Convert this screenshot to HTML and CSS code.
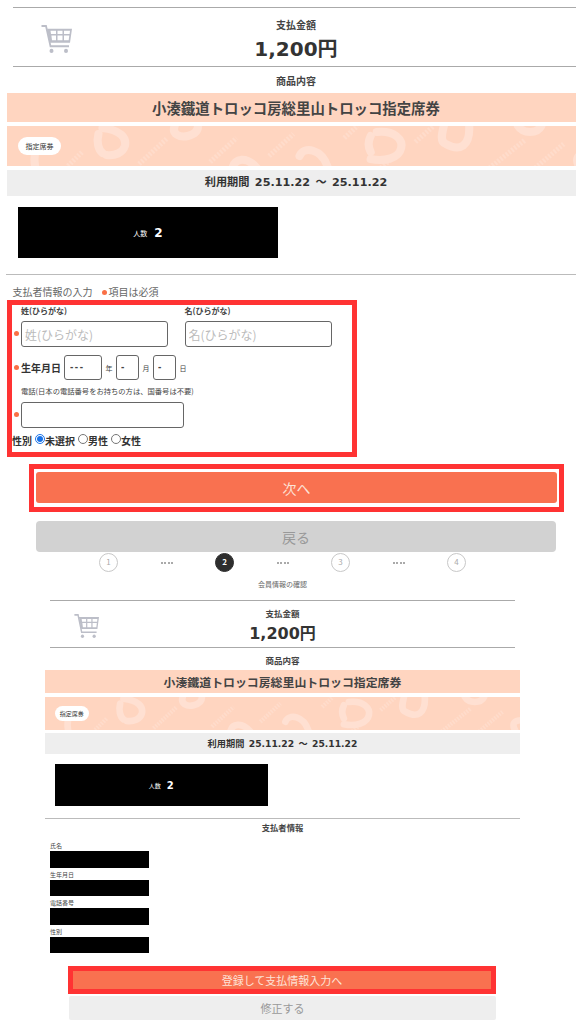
FILE: index.html
```html
<!DOCTYPE html>
<html lang="ja">
<head>
<meta charset="utf-8">
<title>支払者情報の入力</title>
<link rel="stylesheet" href="styles.css">
</head>
<body>
<svg class="defs" width="0" height="0" aria-hidden="true">
  <symbol id="cart" viewBox="0 0 31 27" preserveAspectRatio="none">
    <path class="cart-line" d="M0.5 1H5L9.5 20.5H28"/>
    <path class="cart-basket" fill-rule="evenodd" d="M6 3.5H31L29 17H9ZM9.5 5.5L10 8.7H15V5.5ZM16.5 5.5V8.7H21.5V5.5ZM23 5.5V8.7H28.6L29 5.5ZM10.4 10.2L11 14.8H15V10.2ZM16.5 10.2V14.8H21.5V10.2ZM23 10.2V14.8H27.7L28.3 10.2Z"/>
    <circle class="cart-wheel" cx="10.5" cy="25" r="2"/>
    <circle class="cart-wheel" cx="25" cy="25" r="2"/>
  </symbol>
  <symbol id="pattern" viewBox="0 0 569 40" preserveAspectRatio="none">
    <g class="marks">
      <path d="M130 38L158 12"/>
      <path d="M200 36L226 12"/>
      <path d="M258 30L282 8"/>
      <path d="M402 16L420 0"/>
      <path d="M475 42L510 14"/>
      <path d="M520 42L548 18"/>
      <path d="M60 40L74 26"/>
      <path d="M332 12L345 0"/>
      <path d="M368 42L382 30"/>
    </g>
    <g class="crescents">
      <path d="M94 2C112 4 118 12 116 20C114 27 106 30 98 29"/>
      <path d="M90 8C88 16 90 24 94 27"/>
      <path d="M165 0C162 8 170 12 178 10C186 8 188 4 188 0"/>
      <path d="M28 42C24 22 34 14 44 20"/>
      <path d="M222 42C224 32 236 30 246 42"/>
      <path d="M364 6C382 4 390 14 388 22C386 32 372 36 358 33"/>
      <path d="M358 10C355 16 356 22 358 26"/>
      <path d="M430 0C428 8 426 16 432 18C446 26 456 20 455 0"/>
      <path d="M503 0C508 8 522 8 526 0"/>
      <path d="M288 30C292 20 310 22 316 42"/>
      <path d="M564 42C558 32 562 28 572 28"/>
    </g>
  </symbol>
</svg>

<main class="panel">
  <section class="summary">
    <svg class="cart"><use href="#cart"/></svg>
    <div class="summary-text">
      <div class="caption">支払金額</div>
      <div class="amount">1,200円</div>
    </div>
  </section>
  <div class="caption product-heading">商品内容</div>
  <div class="ticket-title">小湊鐵道トロッコ房総里山トロッコ指定席券</div>
  <div class="ticket-type">
    <svg class="pattern"><use href="#pattern"/></svg>
    <span class="pill">指定席券</span>
  </div>
  <div class="ticket-period">利用期間 25.11.22 ～ 25.11.22</div>
  <div class="people"><small>人数</small><b>2</b></div>

  <hr class="divider">
  <p class="form-note">支払者情報の入力<span class="dot dot--note"></span>項目は必須</p>

  <form class="form-box">
    <div class="row">
      <span class="dot dot--input"></span>
      <label class="field">
        <span class="mini-label">姓(ひらがな)</span>
        <input class="text-input" type="text" placeholder="姓(ひらがな)">
      </label>
      <label class="field">
        <span class="mini-label">名(ひらがな)</span>
        <input class="text-input" type="text" placeholder="名(ひらがな)">
      </label>
    </div>
    <div class="row row--dob">
      <span class="dot"></span>
      <span class="dob-label">生年月日</span>
      <select class="date-select date-select--year"><option>---</option></select>
      <span class="unit">年</span>
      <select class="date-select"><option>-</option></select>
      <span class="unit">月</span>
      <select class="date-select"><option>-</option></select>
      <span class="unit">日</span>
    </div>
    <div class="row row--phone">
      <span class="dot dot--input"></span>
      <label class="field field--phone">
        <span class="mini-label mini-label--thin">電話(日本の電話番号をお持ちの方は、国番号は不要)</span>
        <input class="text-input" type="tel">
      </label>
    </div>
    <div class="gender">
      <span>性別</span>
      <label class="radio"><input type="radio" name="gender" checked>未選択</label>
      <label class="radio"><input type="radio" name="gender">男性</label>
      <label class="radio"><input type="radio" name="gender">女性</label>
    </div>
  </form>

  <div class="next-frame"><button class="btn btn--primary" type="button">次へ</button></div>
  <button class="btn btn--back" type="button">戻る</button>
</main>

<section class="panel panel--compact">
  <ol class="steps">
    <li class="step">1</li>
    <li class="step-gap"></li>
    <li class="step step--active">2</li>
    <li class="step-gap"></li>
    <li class="step">3</li>
    <li class="step-gap"></li>
    <li class="step">4</li>
  </ol>
  <div class="step-title">会員情報の確認</div>
  <section class="summary">
    <svg class="cart"><use href="#cart"/></svg>
    <div class="summary-text">
      <div class="caption">支払金額</div>
      <div class="amount">1,200円</div>
    </div>
  </section>
  <div class="caption product-heading">商品内容</div>
  <div class="ticket-title">小湊鐵道トロッコ房総里山トロッコ指定席券</div>
  <div class="ticket-type">
    <svg class="pattern"><use href="#pattern"/></svg>
    <span class="pill">指定席券</span>
  </div>
  <div class="ticket-period">利用期間 25.11.22 ～ 25.11.22</div>
  <div class="people"><small>人数</small><b>2</b></div>

  <hr class="divider">
  <div class="payer-heading">支払者情報</div>
  <dl class="payer">
    <dt>氏名</dt><dd></dd>
    <dt>生年月日</dt><dd></dd>
    <dt>電話番号</dt><dd></dd>
    <dt>性別</dt><dd></dd>
  </dl>
  <button class="btn btn--register" type="button">登録して支払情報入力へ</button>
  <button class="btn btn--edit" type="button">修正する</button>
</section>
</body>
</html>
```
FILE: styles.css
```css
* { box-sizing: border-box; }
html, body { margin: 0; padding: 0; }
body {
  width: 576px;
  height: 1024px;
  overflow: hidden;
  background: #fff;
  color: #333;
  font-family: "Noto Sans CJK JP", "Noto Sans", sans-serif;
}
.defs { position: absolute; }

.panel { margin-left: 7px; width: 578px; }
.panel--compact { margin-left: 45px; width: 475px; }

/* summary */
.summary {
  margin: 7px 5.5px 0;
  height: 60px;
  border-top: 1px solid #aaa;
  border-bottom: 1px solid #aaa;
  position: relative;
}
.cart {
  position: absolute;
  left: 28.5px;
  top: 17px;
  width: 31px;
  height: 28px;
}
.cart-line { fill: none; stroke: #bcbec8; stroke-width: 1.8; }
.cart-basket, .cart-wheel { fill: #bcbec8; }
.summary-text { padding-top: 10px; text-align: center; }
.caption {
  font-size: 10px;
  line-height: 14px;
  font-weight: 700;
  text-align: center;
  color: #444;
}
.amount {
  margin-top: 3px;
  font-family: "DejaVu Sans", "Noto Sans CJK JP", sans-serif;
  font-size: 20px;
  line-height: 28px;
  font-weight: 700;
  color: #333;
}
.product-heading { margin: 7px 0 5px; }

.ticket-title {
  height: 29px;
  background: #ffd5c0;
  font-size: 14.4px;
  line-height: 29px;
  font-weight: 700;
  text-align: center;
  color: #444;
}
.ticket-type {
  position: relative;
  height: 40px;
  margin-top: 4px;
  padding-left: 11px;
  display: flex;
  align-items: center;
  background: #ffd5c0;
  overflow: hidden;
}
.pattern { position: absolute; left: 0; top: 0; width: 100%; height: 100%; }
.crescents path { fill: none; stroke: #ffe0d2; stroke-width: 8; stroke-linecap: round; }
.marks path { fill: none; stroke: #ffdccb; stroke-width: 5; stroke-dasharray: 2 1.5; }
.pill {
  position: relative;
  width: 43px;
  height: 18px;
  border-radius: 9px;
  background: #fff;
  font-size: 7px;
  line-height: 18px;
  text-align: center;
  color: #333;
}
.ticket-period {
  height: 26px;
  margin-top: 4px;
  background: #eee;
  font-family: "DejaVu Sans", "Noto Sans CJK JP", sans-serif;
  font-size: 11.2px;
  line-height: 26px;
  font-weight: 700;
  word-spacing: 1.5px;
  text-align: center;
  color: #333;
}
.people {
  width: 260px;
  height: 51px;
  margin: 11px 0 0 11px;
  display: flex;
  align-items: center;
  justify-content: center;
  gap: 7px;
  background: #000;
  color: #fff;
}
.people small { font-size: 7px; }
.people b { font-family: "DejaVu Sans", sans-serif; font-size: 12px; }

.divider {
  height: 1px;
  margin: 16px 0 0 -1px;
  border: 0;
  background: #bbb;
}

/* form */
.form-note {
  margin: 9px 0 0 5.5px;
  font-size: 10px;
  line-height: 15px;
  color: #666;
}
.dot {
  flex: none;
  width: 5px;
  height: 5px;
  margin: 0 2px;
  border-radius: 50%;
  background: #fa7046;
}
.dot--note { display: inline-block; margin: 0 2px 1px 9px; vertical-align: middle; }
.dot--input { align-self: flex-end; margin-bottom: 11px; }

.form-box {
  width: 350px;
  height: 157px;
  margin-top: 1px;
  border: 5px solid #ff3333;
}
.row { display: flex; }
.field { display: block; width: 147px; margin-right: 16.5px; }
.field--phone { width: auto; margin-right: 0; }
.field--phone .text-input { width: 163px; }
.mini-label {
  display: block;
  height: 10px;
  margin: 1px 0 5px;
  font-size: 8px;
  line-height: 10px;
  font-weight: 700;
  color: #444;
  white-space: nowrap;
}
.mini-label--thin { margin: 0 0 6px; font-size: 7.3px; font-weight: 400; }
.text-input {
  display: block;
  width: 147px;
  height: 26px;
  padding: 0 3px;
  border: 1px solid #666;
  border-radius: 3px;
  background: #fff;
  font: 12px "Noto Sans CJK JP", sans-serif;
  color: #333;
}
.text-input::placeholder { color: #bbb; opacity: 1; }
.row--dob { align-items: center; margin-top: 8px; height: 25px; }
.row--phone { margin-top: 6px; }
.dob-label { width: 43px; font-size: 10px; font-weight: 700; color: #333; }
.date-select {
  appearance: none;
  width: 23px;
  height: 25px;
  padding: 0 0 2px 4px;
  border: 1px solid #666;
  border-radius: 3px;
  background: #fff;
  font: 700 10px "Liberation Sans", sans-serif;
  letter-spacing: 1.5px;
  color: #444;
}
.date-select--year { width: 38px; padding-left: 5px; }
.unit { width: 14px; font-size: 7px; text-align: center; color: #444; }
.gender {
  display: flex;
  align-items: center;
  gap: 3px;
  height: 14px;
  margin: 5px 0 0;
  font-size: 10px;
  font-weight: 700;
  color: #333;
}
.radio { display: flex; align-items: center; }
.radio input {
  width: 10px;
  height: 10px;
  margin: 0 0 2px 0;
  accent-color: #1a73e8;
}

/* buttons */
.btn {
  display: block;
  border: 0;
  font-family: inherit;
  text-align: center;
  padding: 0;
}
.next-frame {
  width: 535px;
  height: 48px;
  margin: 7px 0 0 22px;
  padding: 3px 2px 4px;
  border: 5px solid #ff3333;
}
.btn--primary {
  width: 100%;
  height: 100%;
  border-radius: 3px;
  background: #f97150;
  color: #fde3d8;
  font-size: 14px;
}
.btn--back {
  width: 520px;
  height: 31px;
  margin: 9px 0 0 29px;
  border-radius: 4px;
  background: #d2d2d2;
  color: #999;
  font-size: 14px;
}

/* steps */
.steps {
  display: flex;
  justify-content: center;
  align-items: center;
  list-style: none;
  height: 19px;
  margin: 1px 0 0;
  padding: 0;
}
.step {
  flex: none;
  width: 19px;
  height: 19px;
  border: 1.5px solid #c8c8c8;
  border-radius: 50%;
  font-size: 8px;
  line-height: 16px;
  text-align: center;
  color: #aaa;
}
.step--active { background: #2e2e2e; border-color: #2e2e2e; color: #fff; font-weight: 700; }
.step-gap {
  flex: none;
  width: 12px;
  height: 0;
  margin: 0 42.5px;
  border-top: 2px dotted #aaa;
}
.step-title {
  margin-top: 7px;
  font-size: 7px;
  line-height: 10px;
  text-align: center;
  color: #666;
}

/* compact overrides */
.panel--compact .summary { margin: 11px 5px 0; height: 48px; }
.panel--compact .cart { left: 23.5px; top: 13px; width: 25px; height: 24px; }
.panel--compact .summary-text { padding-top: 6px; }
.panel--compact .caption { font-size: 8.5px; line-height: 12px; }
.panel--compact .amount { margin-top: 3px; font-size: 16px; line-height: 24px; }
.panel--compact .product-heading { margin: 6px 0 4px; }
.panel--compact .ticket-title { height: 23px; font-size: 11.9px; line-height: 23px; }
.panel--compact .ticket-type { height: 33px; padding-left: 9.5px; }
.panel--compact .pill { width: 34.5px; height: 15px; font-size: 6px; line-height: 15px; }
.panel--compact .ticket-period { height: 21px; margin-top: 3px; font-size: 9.2px; line-height: 21px; word-spacing: 1.2px; }
.panel--compact .people { width: 213.5px; height: 42px; margin: 10px 0 0 9.5px; gap: 6px; }
.panel--compact .people small { font-size: 6px; }
.panel--compact .people b { font-size: 10px; }
.panel--compact .divider { margin: 12px 0 0; }

.payer-heading {
  margin-top: 2px;
  font-size: 8.3px;
  line-height: 13px;
  font-weight: 700;
  text-align: center;
  color: #444;
}
.payer { margin: 8px 0 0 5px; }
.payer dt {
  height: 8px;
  margin-bottom: 1px;
  font-size: 6px;
  line-height: 8px;
  color: #444;
}
.payer dd {
  width: 99px;
  height: 16.6px;
  margin: 0 0 3px;
  background: #000;
}
.btn--register {
  width: 428px;
  height: 28px;
  margin: 13px 0 0 23px;
  border: 5.5px solid #ff3333;
  background: #f97150;
  color: #fde3d8;
  font-size: 11px;
  line-height: 17px;
}
.btn--edit {
  width: 427px;
  height: 24px;
  margin: 2px 0 0 24px;
  border-radius: 2px;
  background: #eee;
  color: #999;
  font-size: 11px;
}
```
